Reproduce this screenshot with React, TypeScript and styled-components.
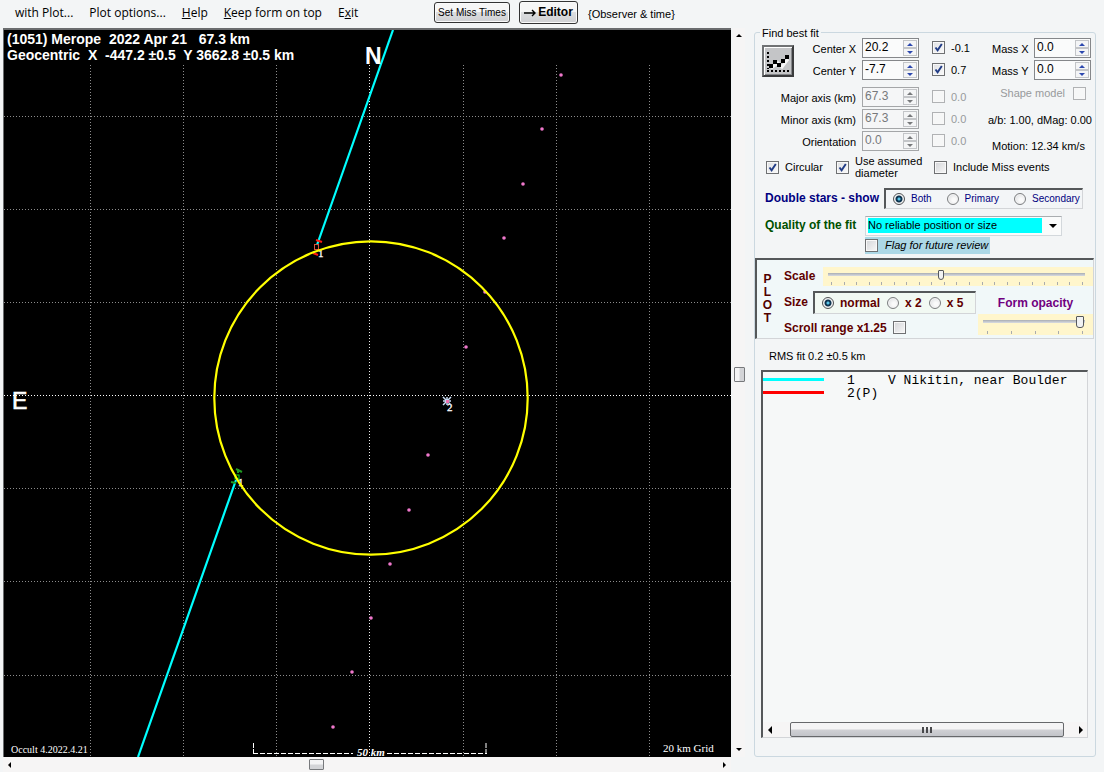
import React, { useState } from "react";
import styled, { createGlobalStyle, css } from "styled-components";

const Global = createGlobalStyle`
  *, *::before, *::after { box-sizing: border-box; }
  body {
    margin: 0;
    background: #f3f5f6;
    color: #000;
    font: 11px/13px "Liberation Sans", Arial, sans-serif;
  }
  button, input, select { font: inherit; color: inherit; margin: 0; }
`;

const sunken = css`
  border: solid;
  border-width: 2px 1px 1px 2px;
  border-color: #55585a #d3d5d8 #d3d5d8 #55585a;
`;

const Window = styled.div`
  display: flex;
  flex-direction: column;
  min-height: 100vh;
`;

/* ---------- menu strip ---------- */
const MenuBar = styled.header`
  display: flex;
  align-items: center;
  height: 28px;
  padding: 0 0 3px 15px;
`;

const Menu = styled.nav`
  display: flex;
  gap: 16px;
  width: 419px;
`;

const MenuItem = styled.button`
  padding: 0;
  border: 0;
  background: none;
  font: 12px/16px "Open Sans", "Noto Sans", sans-serif;
  white-space: nowrap;
`;

const PushButton = styled.button<{ $strong?: boolean }>`
  display: flex;
  align-items: center;
  justify-content: center;
  gap: 1px;
  width: ${(p) => (p.$strong ? 59 : 76)}px;
  height: ${(p) => (p.$strong ? 23 : 21)}px;
  margin-right: 9px;
  padding: 0;
  border: 1px solid #333;
  border-radius: 3px;
  background: linear-gradient(#f6f6f6 45%, #dcdddf 50%, #cfd0d3);
  box-shadow: inset 0 0 0 1px #fafafa;
  font-size: ${(p) => (p.$strong ? 12 : 10)}px;
  font-weight: ${(p) => (p.$strong ? "bold" : "normal")};
  white-space: nowrap;
`;

const MenuNote = styled.span`
  padding: 3px 0 0 1px;
`;

/* ---------- main area ---------- */
const Main = styled.main`
  display: flex;
  align-items: flex-start;
  padding-left: 3px;
`;

const PlotColumn = styled.section`
  display: grid;
  grid-template-columns: minmax(0, 1fr) 15px;
  column-gap: 2px;
  flex: 1;
  min-width: 0;
`;

const PlotFrame = styled.div`
  border: solid #6a6c6e;
  border-width: 2px 0 0 1px;
  background: #000;

  svg { display: block; width: 100%; height: auto; }
  text { white-space: pre; }
`;

const Scroll = styled.div<{ $vertical?: boolean }>`
  display: flex;
  flex-direction: ${(p) => (p.$vertical ? "column" : "row")};
  align-items: center;
  background: #f6f5f5;
  ${(p) => (p.$vertical ? "width: 12px;" : "height: 15px;")}
`;

const ScrollArrow = styled.button`
  display: flex;
  align-items: center;
  justify-content: center;
  flex: none;
  width: 13px;
  height: 15px;
  padding: 0;
  border: 0;
  background: none;
`;

const Space = styled.span<{ $grow: number }>`
  flex: ${(p) => p.$grow} 1 0;
`;

const Thumb = styled.span<{ $vertical?: boolean }>`
  flex: none;
  width: ${(p) => (p.$vertical ? 11 : 15)}px;
  height: ${(p) => (p.$vertical ? 15 : 11)}px;
  border: 1px solid #77797c;
  border-radius: 1px;
  background: linear-gradient(${(p) => (p.$vertical ? "to right," : "")} #f4f4f5 45%, #d3d4d7 55%);
`;

/* ---------- side panel ---------- */
const Panel = styled.aside`
  display: flex;
  flex-direction: column;
  flex: none;
  align-self: stretch;
  width: 342px;
  margin: 4px 8px 15px 6px;
  position: relative;
  border: 1px solid #cbd8e0;
  border-radius: 3px;
`;

const PanelTitle = styled.h2`
  position: absolute;
  top: -6px;
  left: 5px;
  margin: 0;
  padding: 0 2px;
  background: #f3f5f6;
  font-size: 11px;
  font-weight: normal;
  line-height: 13px;
`;

const FitArea = styled.div`
  display: flex;
  justify-content: space-between;
  padding: 5px 4px 0 7px;
`;

const FitGrid = styled.div`
  display: grid;
  grid-template-columns: 32px 56px 57px 13px auto;
  grid-template-rows: 22px 27px 22px 22px 22px;
  align-items: start;
  column-gap: 6px;
`;

const FitButton = styled.button`
  grid-row: 1 / span 2;
  width: 32px;
  height: 32px;
  margin-top: 7px;
  padding: 0;
  border: 2px solid;
  border-color: #707274 #3b3c3e #3b3c3e #707274;
  background: #c4c5c7;
  box-shadow: inset 1px 1px 0 #fff, inset -1px -1px 0 #85878a;

  svg { display: block; width: 28px; height: 28px; }
`;

const FieldLabel = styled.label<{ $wide?: boolean }>`
  grid-column: ${(p) => (p.$wide ? "1 / span 2" : "2")};
  padding-top: 5px;
  text-align: right;
  white-space: nowrap;
`;

const SpinBox = styled.div<{ $off?: boolean }>`
  display: flex;
  flex: none;
  width: 57px;
  height: 20px;
  padding: 1px;
  border: 1px solid ${(p) => (p.$off ? "#a4a6a8" : "#85878a")};
  background: ${(p) => (p.$off ? "#f5f6f7" : "#fafbfb")};
  color: ${(p) => (p.$off ? "#77797b" : "#000")};

  input {
    flex: 1;
    min-width: 0;
    padding: 0 0 1px 1px;
    border: 0;
    background: none;
    font-size: 12px;
    color: inherit;
  }
`;

const SpinButtons = styled.div`
  display: flex;
  flex-direction: column;
  width: 14px;

  button {
    display: flex;
    align-items: center;
    justify-content: center;
    flex: 1;
    padding: 0;
    border: 1px solid #c3c5c8;
    background: #f4f5f6;
  }
`;

const TickBox = styled.input.attrs({ type: "checkbox" })`
  appearance: none;
  flex: none;
  width: 13px;
  height: 13px;
  border: 1px solid #6f7173;
  background: linear-gradient(135deg, #d3d5d8, #f8f8f8);
  box-shadow: inset 0 0 0 1px #f8f8f8;

  &:checked {
    background:
      url("data:image/svg+xml,%3Csvg xmlns='http://www.w3.org/2000/svg' viewBox='0 0 11 11'%3E%3Cpath d='M2.5 5.5 4.6 8.3 8.8 2' fill='none' stroke='%23213c86' stroke-width='1.9'/%3E%3C/svg%3E")
      center / 11px 11px no-repeat,
      linear-gradient(135deg, #dfe1e4, #fafafa);
  }
  &:disabled { border-color: #b0b2b4; background: #f6f7f7; }
`;

const CellTick = styled(TickBox)`
  margin-top: 3px;
  margin-left: 7px;
`;

const CellValue = styled.span<{ $off?: boolean }>`
  padding: 4px 0 0 7px;
  color: ${(p) => (p.$off ? "#989a9c" : "#000")};
`;

const SideColumn = styled.div`
  display: flex;
  flex-direction: column;
  width: 103px;
  white-space: nowrap;
`;

const MassRow = styled.div`
  display: flex;
  align-items: flex-start;
  justify-content: space-between;
  height: 22px;
  padding-left: 4px;

  label { padding-top: 5px; }
`;

const ShapeRow = styled.label`
  display: flex;
  align-items: center;
  justify-content: flex-end;
  gap: 8px;
  padding: 4px 5px 0 0;
  height: 19px;
  color: #989a9c;
`;

const Fact = styled.p<{ $indent?: boolean }>`
  margin: 13px 0 0 ${(p) => (p.$indent ? 4 : 0)}px;
  font-size: 11px;
  line-height: 13px;
`;

const OptionRow = styled.div`
  display: flex;
  align-items: center;
  height: 28px;
  padding-left: 11px;
`;

const Option = styled.label<{ $width?: number }>`
  display: flex;
  align-items: center;
  gap: 6px;
  width: ${(p) => (p.$width ? p.$width + "px" : "auto")};
  line-height: 12px;
  white-space: nowrap;
`;

const Caption = styled.span<{ $color: string; $width?: number }>`
  display: inline-block;
  flex: none;
  width: ${(p) => (p.$width ? p.$width + "px" : "auto")};
  color: ${(p) => p.$color};
  font-size: 12px;
  font-weight: bold;
  white-space: nowrap;
`;

const SettingRow = styled.div<{ $height: number }>`
  display: flex;
  align-items: center;
  height: ${(p) => p.$height}px;
  padding-left: 10px;
`;

const RadioGroup = styled.div<{ $bold?: boolean }>`
  ${sunken}
  display: flex;
  align-items: center;
  gap: ${(p) => (p.$bold ? 7 : 15)}px;
  width: ${(p) => (p.$bold ? 163 : 199)}px;
  height: ${(p) => (p.$bold ? 23 : 21)}px;
  padding-left: 7px;
  background: ${(p) => (p.$bold ? "#f2f9f3" : "#f3f5f7")};
  color: ${(p) => (p.$bold ? "#600000" : "#000080")};
  font-size: ${(p) => (p.$bold ? 12 : 10)}px;
  font-weight: ${(p) => (p.$bold ? "bold" : "normal")};

  label {
    display: flex;
    align-items: center;
    gap: 6px;
    white-space: nowrap;
  }
`;

const Radio = styled.input.attrs({ type: "radio" })`
  appearance: none;
  flex: none;
  width: 12px;
  height: 12px;
  border: 1px solid #7c7e80;
  border-radius: 50%;
  background: radial-gradient(circle at 60% 60%, #fafafa 20%, #d5d7da);
  box-shadow: inset 0 0 0 1px #f4f4f4;

  &:checked {
    border-color: #505254;
    background: radial-gradient(circle, #59c4e8 0 1px, #0d3450 2px 3px, #e8eaec 4px);
  }
`;

const SelectFrame = styled.div`
  display: flex;
  align-items: center;
  width: 197px;
  height: 20px;
  padding: 2px;
  border: 1px solid #d3d8dc;
  border-top-color: #a9adb0;
  background: #fafbfb;

  select {
    appearance: none;
    width: 174px;
    height: 15px;
    padding: 0;
    border: 0;
    border-radius: 0;
    background: #00ffff;
    line-height: 15px;
  }
  svg { margin-left: 7px; }
`;

const Flag = styled.label`
  display: flex;
  align-items: center;
  gap: 7px;
  width: 125px;
  height: 17px;
  margin: 1px 0 0 110px;
  background: #add8e6;
  font-style: italic;
  white-space: nowrap;
`;

const PlotBox = styled.section`
  ${sunken}
  display: flex;
  width: 339px;
  height: 81px;
  margin-top: 4px;
  background: #f1f8f9;
`;

const SideWord = styled.h3`
  display: flex;
  flex-direction: column;
  align-items: center;
  width: 21px;
  margin: 0;
  padding-top: 13px;
  color: #500000;
  font-size: 12px;
  line-height: 13px;
`;

const PlotControls = styled.div`
  display: flex;
  flex-direction: column;
  flex: 1;
  min-width: 0;
  padding: 6px 0 0 6px;
`;

const ScaleRow = styled.div`
  display: flex;
  justify-content: space-between;
  height: 20px;
  padding-top: 1px;

  label { padding-top: 3px; }
`;

const LowerRow = styled.div`
  display: flex;
  justify-content: space-between;
  padding-top: 5px;
`;

const SizeColumn = styled.div`
  display: flex;
  flex-direction: column;
  gap: 7px;
`;

const SizeRow = styled.div`
  display: flex;
  align-items: center;
`;

const OpacityColumn = styled.div`
  display: flex;
  flex-direction: column;
  align-items: center;
  gap: 4px;
  padding-top: 6px;
`;

const SliderBox = styled.div<{ $wide?: boolean }>`
  width: ${(p) => (p.$wide ? 270 : 115)}px;
  height: ${(p) => (p.$wide ? 19 : 21)}px;
  padding: ${(p) => (p.$wide ? "2px 8px 0 5px" : "1px 8px 0 5px")};
  background: #fff6cc;
`;

const Slider = styled.input.attrs({ type: "range" })<{ $big?: boolean }>`
  appearance: none;
  display: block;
  width: 100%;
  height: ${(p) => (p.$big ? 13 : 11)}px;
  background: linear-gradient(#a9adb3, #d9dce2) center / 100% 3px no-repeat;

  &::-webkit-slider-thumb {
    appearance: none;
    width: ${(p) => (p.$big ? 8 : 6)}px;
    height: ${(p) => (p.$big ? 12 : 10)}px;
    border: 1px solid #55585b;
    border-radius: 1px 1px 3px 3px;
    background: #f1f2f3;
  }
`;

const Ticks = styled.div<{ $big?: boolean }>`
  display: flex;
  justify-content: space-between;
  padding: ${(p) => (p.$big ? "3px 2px 0 4px" : "2px 2px 0 3px")};

  i { width: 1px; height: 3px; background: #a9abad; }
`;

const Result = styled.p`
  margin: 11px 0 7px 14px;
  line-height: 13px;
`;

const ChordList = styled.section`
  ${sunken}
  display: flex;
  flex-direction: column;
  flex: 1;
  margin: 0 7px 18px 6px;
  background: #f6f8f8;
`;

const Chords = styled.ul`
  flex: 1;
  margin: 0;
  padding: 2px 0 0;
  list-style: none;
  font: 13px/13px "Liberation Mono", "Courier New", monospace;

  li { display: flex; white-space: pre; }
`;

const Swatch = styled.span<{ $color: string }>`
  width: 61px;
  height: 3px;
  margin: 4px 23px 0 0;
  background: ${(p) => p.$color};
`;

const ChordNumber = styled.span`
  width: 41px;
`;

const ListThumb = styled.span`
  display: flex;
  align-items: center;
  justify-content: center;
  gap: 2px;
  flex: 1;
  height: 15px;
  margin: 0 10px 0 14px;
  border: 1px solid #66686b;
  border-radius: 2px;
  background: linear-gradient(#f4f4f5 45%, #cfd0d4 55%, #c2c4c9);

  i { width: 2px; height: 6px; background: #48494c; }
`;

/* ---------- drawings ---------- */
const arrowPoints = {
  up: "0,4 4,0 8,4",
  down: "0,0 8,0 4,4",
  left: "4,0 4,8 0,4",
  right: "0,0 4,4 0,8",
};

function Arrow({ dir, size = 8, color = "#000" }: { dir: keyof typeof arrowPoints; size?: number; color?: string }) {
  const flat = dir === "up" || dir === "down";
  return (
    <svg width={flat ? size : size / 2} height={flat ? size / 2 : size} viewBox={flat ? "0 0 8 4" : "0 0 4 8"} aria-hidden>
      <polygon points={arrowPoints[dir]} fill={color} />
    </svg>
  );
}

const gridX = [90, 183, 276, 369, 463, 556, 649];
const gridY = [116, 209, 302, 395, 488, 581, 675];
const pathDots = [
  [561, 75], [542, 129], [523, 184], [504, 238], [485, 292], [466, 347],
  [428, 455], [409, 510], [390, 564], [371, 618], [352, 672], [333, 727],
];

function OccultationPlot() {
  const sans = '"Liberation Sans", Arial, sans-serif';
  const serif = '"Liberation Serif", "Times New Roman", serif';
  return (
    <svg viewBox="4 30 727 727" role="img" aria-label="Occultation chords and fitted circle">
      <g strokeWidth="1" strokeDasharray="1 2" shapeRendering="crispEdges">
        {gridX.map((x) => (
          <line key={x} x1={x + 0.5} x2={x + 0.5} y1="65" y2="757" stroke={x === 369 ? "#eee" : "#8c8c8c"} />
        ))}
        {gridY.map((y) => (
          <line key={y} x1="4" x2="731" y1={y + 0.5} y2={y + 0.5} stroke={y === 395 ? "#fff" : "#8c8c8c"} />
        ))}
      </g>
      {pathDots.map(([x, y]) => (
        <circle key={y} cx={x} cy={y} r="1.8" fill="#f078cc" />
      ))}
      <g stroke="#00ffff" strokeWidth="2.2">
        <line x1="393" y1="30" x2="317" y2="245" />
        <line x1="236" y1="480" x2="138" y2="757" />
      </g>
      <g fill="none" stroke="#ff1a10">
        <path d="M316 240l6 2M313 253l5 2" strokeWidth="2" />
        <rect x="314.500" y="244.500" width="4" height="5" stroke="#d8503c" />
      </g>
      <g fill="none" stroke="#1f9a22">
        <path d="M236 469l6 3M231 482l5 1M238 469v4" strokeWidth="2" />
        <rect x="235" y="475" width="4" height="4" stroke="#00d818" />
      </g>
      <g fill="#fff" fontFamily={serif} fontSize="11" stroke="#fff" strokeWidth="0.3">
        <text x="318" y="257">1</text>
        <text x="238" y="486">1</text>
        <text x="447" y="411">2</text>
      </g>
      <circle cx="371" cy="398" r="156.7" fill="none" stroke="#ffff00" strokeWidth="2.2" />
      <path d="M443 397l8 8M451 397l-8 8M447 397v8M443 401h8" stroke="#c9dcf4" strokeWidth="1.5" />
      <rect x="446" y="400" width="3" height="3" fill="#ef6fae" />
      <g fill="#fff" fontFamily={sans} fontWeight="bold" fontSize="14">
        <text x="7" y="44">{"(1051) Merope  2022 Apr 21   67.3 km"}</text>
        <text x="7" y="60">{"Geocentric  X  -447.2 ±0.5  Y 3662.8 ±0.5 km"}</text>
      </g>
      <g fill="#fff" fontFamily={sans} fontSize="23">
        <text x="365" y="64" fontWeight="bold">N</text>
        <text x="12" y="409" stroke="#fff" strokeWidth="0.6">E</text>
      </g>
      <g stroke="#fff" fill="none">
        <path d="M253.500 743v10M486 743v10" strokeDasharray="5 1" />
        <path d="M253 753.500H353M387 753.500H487" strokeDasharray="5 2" />
      </g>
      <g fill="#fff" fontFamily={serif} fontSize="11">
        <text x="357" y="756" fontStyle="italic" fontWeight="bold">50 km</text>
        <text x="11" y="753" fontSize="10">Occult 4.2022.4.21</text>
        <text x="663" y="752">20 km Grid</text>
      </g>
    </svg>
  );
}

function FitIcon() {
  return (
    <svg viewBox="0 0 28 28" aria-hidden>
      <path d="M4 5v17M3 24h22" stroke="#000" strokeWidth="2" strokeDasharray="2 2" />
      <path d="M7 21l7-5 4 4 6-8" fill="none" stroke="#f6f6f6" strokeWidth="3" />
      <path d="M5 17h4v4H5zM9 13h4v4H9zM13 16h4v4h-4zM17 12h4v4h-4zM21 8h4v4h-4z" fill="#000" />
    </svg>
  );
}

/* ---------- controls ---------- */
function Spin({ id, value, off }: { id: string; value: string; off?: boolean }) {
  const [text, setText] = useState(value);
  const step = (by: number) => setText((Number(text) + by).toFixed(1));
  const color = off ? "#77797b" : "#2c48ae";
  return (
    <SpinBox $off={off}>
      <input id={id} type="text" value={text} disabled={off} onChange={(e) => setText(e.target.value)} />
      <SpinButtons>
        <button type="button" aria-label="Increase" disabled={off} onClick={() => step(0.1)}>
          <Arrow dir="up" size={6} color={color} />
        </button>
        <button type="button" aria-label="Decrease" disabled={off} onClick={() => step(-0.1)}>
          <Arrow dir="down" size={6} color={color} />
        </button>
      </SpinButtons>
    </SpinBox>
  );
}

const fitFields = [
  { id: "center-x", label: "Center X", value: "20.2", delta: "-0.1" },
  { id: "center-y", label: "Center Y", value: "-7.7", delta: "0.7" },
  { id: "major", label: "Major axis (km)", value: "67.3", delta: "0.0", off: true },
  { id: "minor", label: "Minor axis (km)", value: "67.3", delta: "0.0", off: true },
  { id: "orientation", label: "Orientation", value: "0.0", delta: "0.0", off: true },
];

function BestFit() {
  return (
    <FitArea>
      <FitGrid>
        <FitButton type="button" aria-label="Find best fit"><FitIcon /></FitButton>
        {fitFields.map((f) => (
          <React.Fragment key={f.id}>
            <FieldLabel htmlFor={f.id} $wide={f.off}>{f.label}</FieldLabel>
            <Spin id={f.id} value={f.value} off={f.off} />
            <CellTick aria-label={"Fit " + f.label} defaultChecked={!f.off} disabled={f.off} />
            <CellValue $off={f.off}>{f.delta}</CellValue>
          </React.Fragment>
        ))}
      </FitGrid>
      <SideColumn>
        <MassRow><label htmlFor="mass-x">Mass X</label><Spin id="mass-x" value="0.0" /></MassRow>
        <MassRow><label htmlFor="mass-y">Mass Y</label><Spin id="mass-y" value="0.0" /></MassRow>
        <ShapeRow>Shape model <TickBox disabled /></ShapeRow>
        <Fact>a/b: 1.00, dMag: 0.00</Fact>
        <Fact $indent>Motion: 12.34 km/s</Fact>
      </SideColumn>
    </FitArea>
  );
}

function PlotSettings() {
  return (
    <PlotBox>
      <SideWord>{"PLOT".split("").map((c) => <span key={c}>{c}</span>)}</SideWord>
      <PlotControls>
        <ScaleRow>
          <label htmlFor="scale"><Caption $color="#600000">Scale</Caption></label>
          <SliderBox $wide>
            <Slider id="scale" min={0} max={100} defaultValue={44} />
            <Ticks>{Array.from({ length: 21 }, (_, i) => <i key={i} />)}</Ticks>
          </SliderBox>
        </ScaleRow>
        <LowerRow>
          <SizeColumn>
            <SizeRow>
              <Caption $color="#600000" $width={29}>Size</Caption>
              <RadioGroup $bold role="radiogroup" aria-label="Size">
                <label><Radio name="size" defaultChecked />normal</label>
                <label><Radio name="size" />x 2</label>
                <label><Radio name="size" />x 5</label>
              </RadioGroup>
            </SizeRow>
            <Option>
              <Caption $color="#600000">Scroll range x1.25</Caption>
              <TickBox />
            </Option>
          </SizeColumn>
          <OpacityColumn>
            <label htmlFor="opacity"><Caption $color="#700080">Form opacity</Caption></label>
            <SliderBox>
              <Slider id="opacity" $big min={0} max={100} defaultValue={99} />
              <Ticks $big>{Array.from({ length: 5 }, (_, i) => <i key={i} />)}</Ticks>
            </SliderBox>
          </OpacityColumn>
        </LowerRow>
      </PlotControls>
    </PlotBox>
  );
}

export default function App() {
  return (
    <>
      <Global />
      <Window>
        <MenuBar>
          <Menu>
            <MenuItem>with Plot...</MenuItem>
            <MenuItem>Plot options...</MenuItem>
            <MenuItem><u>H</u>elp</MenuItem>
            <MenuItem><u>K</u>eep form on top</MenuItem>
            <MenuItem>E<u>x</u>it</MenuItem>
          </Menu>
          <PushButton type="button">Set Miss Times</PushButton>
          <PushButton type="button" $strong>
            <svg width="13" height="8" viewBox="0 0 13 8" aria-hidden>
              <path d="M0 4h11M8 1l3 3-3 3" fill="none" stroke="#000" strokeWidth="1.4" />
            </svg>
            Editor
          </PushButton>
          <MenuNote>{"{Observer & time}"}</MenuNote>
        </MenuBar>
        <Main>
          <PlotColumn>
            <PlotFrame><OccultationPlot /></PlotFrame>
            <Scroll $vertical>
              <ScrollArrow type="button" aria-label="Scroll up"><Arrow dir="up" size={6} /></ScrollArrow>
              <Space $grow={324} />
              <Thumb $vertical />
              <Space $grow={360} />
              <ScrollArrow type="button" aria-label="Scroll down"><Arrow dir="down" size={6} /></ScrollArrow>
            </Scroll>
            <Scroll>
              <ScrollArrow type="button" aria-label="Scroll left"><Arrow dir="left" size={6} /></ScrollArrow>
              <Space $grow={293} />
              <Thumb />
              <Space $grow={394} />
              <ScrollArrow type="button" aria-label="Scroll right"><Arrow dir="right" size={6} /></ScrollArrow>
            </Scroll>
          </PlotColumn>
          <Panel>
            <PanelTitle>Find best fit</PanelTitle>
            <BestFit />
            <OptionRow>
              <Option $width={70}><TickBox defaultChecked />Circular</Option>
              <Option $width={98}><TickBox defaultChecked /><span>Use assumed<br />diameter</span></Option>
              <Option><TickBox />Include Miss events</Option>
            </OptionRow>
            <SettingRow $height={34}>
              <Caption $color="#000080" $width={119}>Double stars - show</Caption>
              <RadioGroup role="radiogroup" aria-label="Double stars - show">
                <label><Radio name="star" defaultChecked />Both</label>
                <label><Radio name="star" />Primary</label>
                <label><Radio name="star" />Secondary</label>
              </RadioGroup>
            </SettingRow>
            <SettingRow $height={21}>
              <label htmlFor="quality"><Caption $color="#005000" $width={100}>Quality of the fit</Caption></label>
              <SelectFrame>
                <select id="quality"><option>No reliable position or size</option></select>
                <Arrow dir="down" size={8} />
              </SelectFrame>
            </SettingRow>
            <Flag><TickBox />Flag for future review</Flag>
            <PlotSettings />
            <Result>RMS fit 0.2 ±0.5 km</Result>
            <ChordList>
              <Chords>
                <li><Swatch $color="#00ffff" /><ChordNumber>1</ChordNumber>V Nikitin, near Boulder</li>
                <li><Swatch $color="#ff0000" /><ChordNumber>2(P)</ChordNumber></li>
              </Chords>
              <Scroll>
                <ScrollArrow type="button" aria-label="Scroll list left"><Arrow dir="left" /></ScrollArrow>
                <ListThumb><i /><i /><i /></ListThumb>
                <ScrollArrow type="button" aria-label="Scroll list right"><Arrow dir="right" /></ScrollArrow>
              </Scroll>
            </ChordList>
          </Panel>
        </Main>
      </Window>
    </>
  );
}
